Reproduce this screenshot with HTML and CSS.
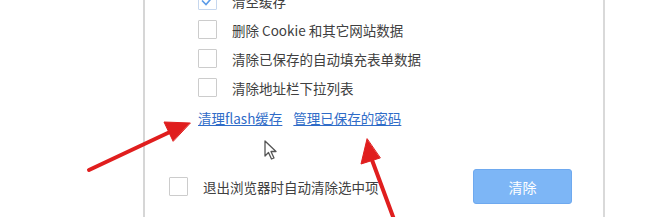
FILE: index.html
```html
<!DOCTYPE html>
<html>

<head>
    <meta charset="utf-8">
    <link rel="stylesheet" href="styles.css">
</head>

<body>

    <div id="page">
        <div class="gutter"></div>

        <div id="panel">
            <div class="options">
                <div class="row">
                    <span class="box checked">
                        <svg width="19" height="19" viewBox="0 0 19 19"><path d="M4 9.5 L8 13.5 L15 5.5" fill="none" stroke="#5b9be8" stroke-width="1.6"/></svg>
                    </span>
                    <span class="label">清空缓存</span>
                </div>
                <div class="row">
                    <span class="box"></span>
                    <span class="label">删除 Cookie 和其它网站数据</span>
                </div>
                <div class="row">
                    <span class="box"></span>
                    <span class="label">清除已保存的自动填充表单数据</span>
                </div>
                <div class="row">
                    <span class="box"></span>
                    <span class="label">清除地址栏下拉列表</span>
                </div>

                <div class="links">
                    <a href="#">清理flash缓存</a>
                    <a href="#">管理已保存的密码</a>
                </div>
            </div>

            <div class="footer">
                <div class="row">
                    <span class="box"></span>
                    <span class="label">退出浏览器时自动清除选中项</span>
                </div>
                <button class="clear">清除</button>
            </div>
        </div>
    </div>

    <!-- cursor -->
    <svg class="cursor" width="16" height="22" viewBox="0 0 16 22">
        <path d="M1 1 L1 16 L4.5 12.5 L7.5 19 L10 18 L7 11.5 L12 11.5 Z" fill="#fff" stroke="#555" stroke-width="1.3" stroke-linejoin="round"/>
    </svg>

    <!-- red arrows drawn over the screenshot -->
    <svg class="arrows" width="660" height="217" viewBox="0 0 660 217">
        <g fill="#e01e1e" stroke="#e01e1e" stroke-linecap="round">
            <line x1="89" y1="170" x2="172" y2="131" stroke-width="4"/>
            <polygon points="190,123 164,122 173,141" stroke-width="1"/>
            <line x1="395" y1="222" x2="372" y2="160" stroke-width="4"/>
            <polygon points="367,139 361,164 380,158" stroke-width="1"/>
        </g>
    </svg>

</body>

</html>
```

FILE: styles.css
```css
body {
    margin: 0;
    background-color: #ffffff;
    font-family: "Noto Sans CJK SC", "Noto Sans", sans-serif;
    font-size: 13.5px;
    color: #404040;
    width: 660px;
    height: 217px;
    overflow: hidden;
    position: relative;
}

#page {
    display: flex;
    height: 217px;
}

.gutter {
    width: 143px;
    flex-shrink: 0;
}

#panel {
    width: 403px;
    border-left: 2px solid #d6d6d6;
    border-right: 2px solid #d9d9d9;
    padding: 0 31px 0 24px;
    display: flex;
    flex-direction: column;
}

.options {
    margin-top: -14px;
    padding-left: 29px;
}

.row {
    display: flex;
    align-items: center;
    height: 29px;
}

.box {
    width: 17px;
    height: 17px;
    border: 1px solid #cccccc;
    border-radius: 1px;
    background-color: #ffffff;
    flex-shrink: 0;
    position: relative;
}

.box.checked {
    border-color: #c6d7ee;
}

.box.checked svg {
    position: absolute;
    left: -1px;
    top: -1px;
}

.label {
    margin-left: 15px;
    line-height: 18px;
    white-space: nowrap;
}

.links {
    display: flex;
    gap: 11px;
    height: 32px;
    align-items: center;
}

.links a {
    color: #2f6cc8;
    text-decoration: underline;
    line-height: 18px;
}

.footer {
    margin-top: 35px;
    display: flex;
    align-items: center;
    justify-content: space-between;
    height: 35px;
}

.clear {
    width: 99px;
    height: 35px;
    background-color: #7db6f6;
    border: 1px solid #6ea9ef;
    border-radius: 3px;
    color: #ffffff;
    font-family: "Noto Sans CJK SC", sans-serif;
    font-size: 14px;
    padding: 0;
}

.cursor {
    position: absolute;
    left: 264px;
    top: 140px;
}

.arrows {
    position: absolute;
    left: 0;
    top: 0;
    pointer-events: none;
}
```
